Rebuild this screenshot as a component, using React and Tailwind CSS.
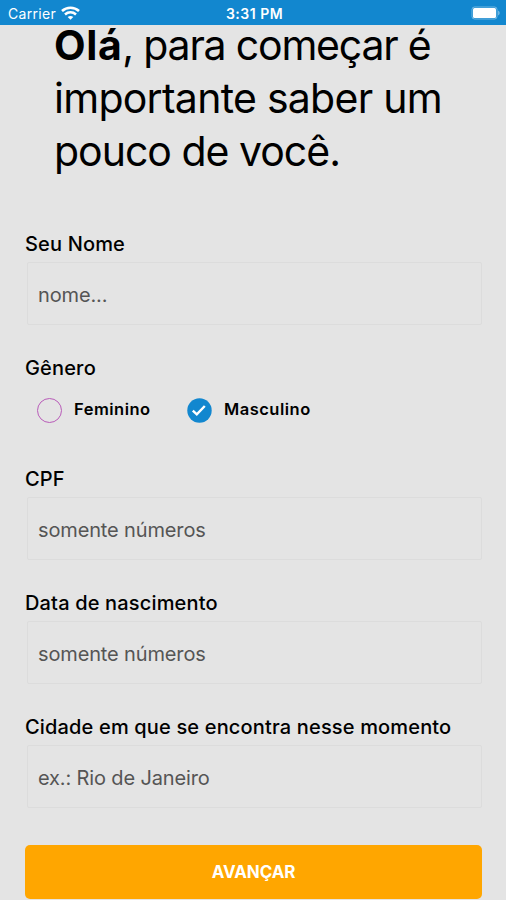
import { useState } from "react";

const genders = ["Feminino", "Masculino"];

function StatusBar() {
  return (
    <header className="relative z-10 flex h-[25px] shrink-0 items-center justify-between bg-[#1287cf] pl-2 pr-[5px] text-white">
      <div className="flex flex-1 items-center gap-[5px]">
        <span className="pt-[2px] text-[14px] leading-none tracking-[0.3px]">Carrier</span>
        <svg width="19" height="14" viewBox="0 0 19 14" fill="none" stroke="currentColor" strokeWidth="2.6">
          <path d="M1 5C5.8.6 13.2.6 18 5" />
          <path d="M4 8.4c3.2-2.8 7.8-2.8 11 0" />
          <path d="M6.7 11c1.7-1.5 3.9-1.5 5.6 0L9.5 13.8z" fill="currentColor" stroke="none" />
        </svg>
      </div>
      <span className="pt-[2px] text-[14px] font-semibold leading-none tracking-[0.5px]">3:31 PM</span>
      <div className="flex flex-1 justify-end">
        <svg width="31" height="14" viewBox="0 0 31 14" fill="none">
          <rect x="2" y="1" width="25" height="12" rx="2.5" stroke="currentColor" strokeOpacity="0.4" />
          <rect x="3" y="2" width="23" height="10" rx="1.5" fill="currentColor" />
          <path d="M28 4.5c2.3.8 2.3 4.2 0 5z" fill="currentColor" fillOpacity="0.4" />
        </svg>
      </div>
    </header>
  );
}

function Field({ label, placeholder }) {
  return (
    <label className="block">
      <span className="block h-[30px] text-[20px] font-medium leading-[24px] tracking-[0.16px]">{label}</span>
      <input
        placeholder={placeholder}
        className="ml-[2px] block h-[63px] w-[455px] rounded-[2px] border border-[#dcdcdc] bg-transparent px-[10px] pt-[3px] text-[20px] tracking-[-0.14px] text-[#555] outline-none placeholder:text-[#555]"
      />
    </label>
  );
}

function App() {
  const [gender, setGender] = useState("Masculino");

  return (
    <div className="flex h-[900px] w-[506px] flex-col overflow-hidden bg-[#e4e4e4] font-['Inter',sans-serif] text-black">
      <StatusBar />
      <h1 className="-mt-[6px] pl-[54px] text-[41px] font-normal leading-[53px]">
        <span className="block tracking-[-1.2px]">
          <strong className="font-bold tracking-[0.6px]">Olá</strong>, para começar é
        </span>
        <span className="block tracking-[-0.73px]">importante saber um</span>
        <span className="block tracking-[-1px]">pouco de você.</span>
      </h1>
      <form className="mt-[54px] px-[25px]">
        <Field label="Seu Nome" placeholder="nome..." />
        <div className="mt-[31px] h-[80px]">
          <p className="text-[20px] font-medium leading-[24px] tracking-[0.16px]">Gênero</p>
          <div className="mt-[18px] flex">
            {genders.map((item) => (
              <button
                key={item}
                type="button"
                onClick={() => setGender(item)}
                className="ml-[12px] flex w-[138px] items-center gap-[12px] text-[16.5px] font-semibold leading-[26px] tracking-[0.5px]"
              >
                {gender === item ? (
                  <svg width="25" height="25" viewBox="0 0 25 25" fill="none" className="shrink-0">
                    <circle cx="12.5" cy="12.5" r="12.2" fill="#1287cf" />
                    <path d="m5.8 12.6 4 3.8 8-8.4" stroke="white" strokeWidth="2.4" />
                  </svg>
                ) : (
                  <span className="h-[25px] w-[25px] shrink-0 rounded-full border border-[#b95cb9]" />
                )}
                <span className="-mt-[4px]">{item}</span>
              </button>
            ))}
          </div>
        </div>
        <div className="mt-[31px] flex flex-col gap-[31px]">
          <Field label="CPF" placeholder="somente números" />
          <Field label="Data de nascimento" placeholder="somente números" />
          <Field label="Cidade em que se encontra nesse momento" placeholder="ex.: Rio de Janeiro" />
        </div>
        <button
          type="button"
          className="mt-[37px] h-[54px] w-[457px] rounded-[5px] bg-[#ffa600] pt-[2px] text-[17px] font-bold tracking-[-0.1px] text-white"
        >
          AVANÇAR
        </button>
      </form>
    </div>
  );
}

export default App;
